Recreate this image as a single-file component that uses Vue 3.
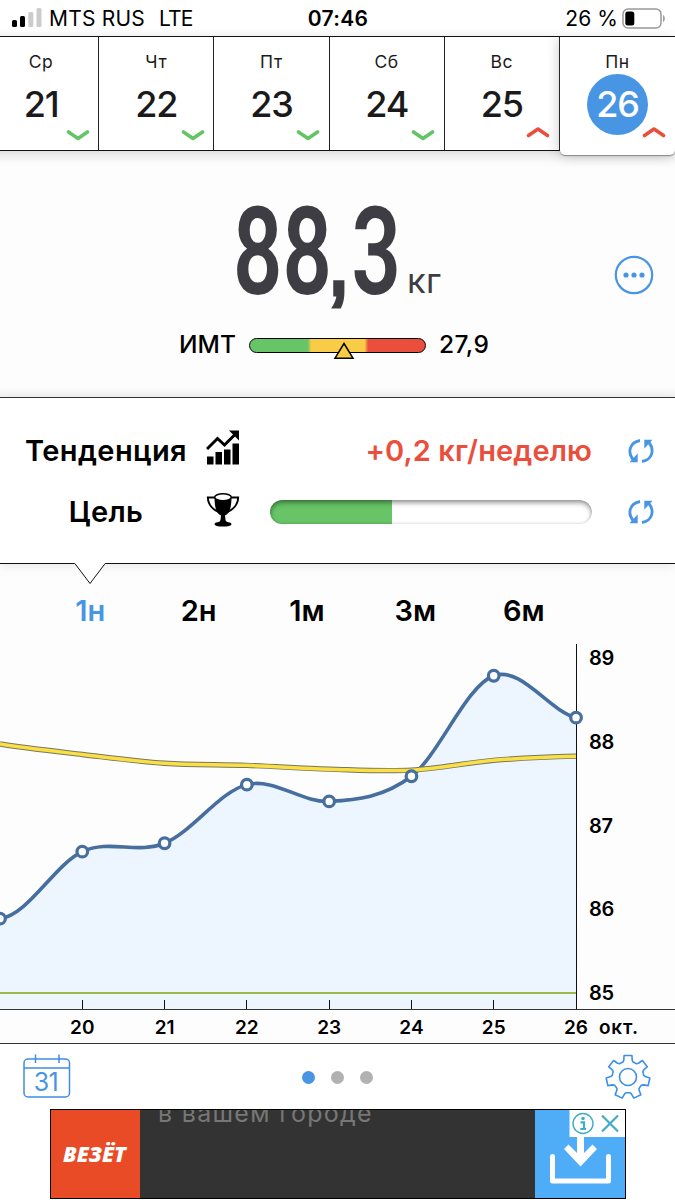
<script setup>
import { ref, computed } from 'vue'

const days = [
  { name: 'Ср', num: 21, dir: 'down' },
  { name: 'Чт', num: 22, dir: 'down' },
  { name: 'Пт', num: 23, dir: 'down' },
  { name: 'Сб', num: 24, dir: 'down' },
  { name: 'Вс', num: 25, dir: 'up' },
  { name: 'Пн', num: 26, dir: 'up' },
]
const selected = ref(26)

const ranges = ['1н', '2н', '1м', '3м', '6м']
const range  = ref('1н')

const goal = 38

// chart geometry
const STEP = 82.29
const TOP  = 644
const yOf  = v => 994 - TOP - (v - 85) * 83.75

const weights = [85.9, 86.7, 86.8, 87.5, 87.3, 87.6, 88.8, 88.3]
const trend   = [87.985, 87.86, 87.755, 87.73, 87.685, 87.673, 87.79, 87.84]
const ticks   = [20, 21, 22, 23, 24, 25]
const levels  = [89, 88, 87, 86, 85]

const toPoints = list => list.map((v, i) => ({ x: i * STEP, y: yOf(v) }))

// Catmull-Rom through the points, written as cubic beziers
function smooth(pts, first) {
  const slope = i => {
    if (i === 0) return first
    const a = pts[i - 1]
    const b = pts[i + 1] || pts[i]
    return (b.y - a.y) / 2
  }
  let d = `M${pts[0].x},${pts[0].y}`
  for (let i = 1; i < pts.length; i++) {
    const a = pts[i - 1], b = pts[i]
    d += ` C${a.x + STEP / 3},${a.y + slope(i - 1) / 3} ${b.x - STEP / 3},${b.y - slope(i) / 3} ${b.x},${b.y}`
  }
  return d
}

const points    = computed(() => toPoints(weights))
const line      = computed(() => smooth(points.value, -8))
const area      = computed(() => `${line.value} V365 H0 Z`)
const trendLine = computed(() => smooth(toPoints(trend), 13))

// seven-tooth gear outline
const gear = (() => {
  const out = []
  for (let i = 0; i < 7; i++) {
    const c = -Math.PI / 2 + i * Math.PI * 2 / 7
    for (const [r, a] of [[15.8, -0.33], [17.2, -0.25], [21.9, -0.18], [21.9, 0.18], [17.2, 0.25], [15.8, 0.33]]) {
      out.push(`${(24 + r * Math.cos(c + a)).toFixed(2)},${(24 + r * Math.sin(c + a)).toFixed(2)}`)
    }
  }
  return out.join(' ')
})()
</script>

<template>
  <div class="app">
    <!-- status bar -->
    <header class="status">
      <div class="status-left">
        <svg class="signal" width="30" height="20" viewBox="0 0 30 20">
          <rect x="0" y="12" width="5" height="7" rx="1.500" fill="#000" />
          <rect x="8" y="8" width="5" height="11" rx="1.500" fill="#000" />
          <rect x="16.300" y="4" width="5" height="15" rx="1.500" fill="#ccc" />
          <rect x="24.500" y="0" width="5" height="19" rx="1.500" fill="#ccc" />
        </svg>
        <span class="carrier">MTS RUS</span>
        <span class="network">LTE</span>
      </div>
      <div class="clock">07:46</div>
      <div class="status-right">
        <span class="percent">26 %</span>
        <svg width="44" height="21" viewBox="0 0 44 21">
          <rect x="1" y="1" width="38" height="19" rx="5" fill="#fff" stroke="#999" stroke-width="1.500" />
          <rect x="3.300" y="3.500" width="9" height="14" rx="2.500" fill="#000" />
          <path d="M41.500 7.500 Q43.500 10.500 41.500 13.500 Z" fill="#999" stroke="#999" stroke-width=".8" />
        </svg>
      </div>
    </header>

    <!-- week strip -->
    <nav class="week">
      <div
        v-for="d in days"
        :key="d.num"
        class="day"
        :class="{ 'day-active': d.num === selected }"
        @click="selected = d.num"
      >
        <div class="day-name">{{ d.name }}</div>
        <div class="day-num">{{ d.num }}</div>
        <svg class="day-dir" :class="'day-' + d.dir" width="24" height="12" viewBox="0 0 24 12">
          <path :d="d.dir === 'down' ? 'M2.500 2 L12 8.500 L21.500 2' : 'M2.500 9.500 L12 3 L21.500 9.500'" />
        </svg>
      </div>
    </nav>

    <!-- current weight -->
    <section class="weight">
      <div class="weight-row">
        <svg class="weight-value" width="170" height="120" viewBox="0 0 170 120">
          <text transform="translate(0 92.500) scale(.71 1)">88<tspan class="comma" x="138.500">,</tspan><tspan x="167">3</tspan></text>
        </svg>
        <span class="weight-unit">кг</span>
      </div>
      <div class="bmi">
        <span class="bmi-label">ИМТ</span>
        <div class="bmi-bar">
          <svg class="bmi-mark" width="22" height="18" viewBox="0 0 22 18">
            <path d="M11 1.500 L20 16.200 H2 Z" />
          </svg>
        </div>
        <span class="bmi-value">27,9</span>
      </div>
      <button class="more">
        <svg width="40" height="40" viewBox="0 0 40 40">
          <circle cx="20" cy="20" r="18.200" fill="none" stroke="#4896e3" stroke-width="2.200" />
          <circle v-for="x in [12, 20, 28]" :key="x" :cx="x" cy="20" r="2.600" fill="#4896e3" />
        </svg>
      </button>
    </section>

    <!-- trend and goal -->
    <section class="panel">
      <div class="panel-row">
        <span class="panel-label">Тенденция</span>
        <svg class="panel-icon panel-icon-trend" width="34" height="36" viewBox="0 0 34 36">
          <path d="M1 27.500h6.500v8H1zM9.500 23h6.500v12.500H9.500zM18 20.500h6.500v15h-6.500zM26.500 14.500h6.500v21h-6.500z" />
          <path d="M1 20 L11.500 9.500 L18.500 16 L29 5.500" fill="none" stroke="#000" stroke-width="3" />
          <path d="M23 1.500 H33 V11.500 Z" />
        </svg>
        <span class="panel-value">+0,2 кг/неделю</span>
        <svg class="sync" width="26" height="26" viewBox="0 0 26 26">
          <path d="M12 2.500 C1.500 4.500 -1 14.500 5.500 22 M14 23.500 C24.500 21.500 27 11.500 20.500 4" />
          <path class="sync-head" d="M1.500 24.300 H9.700 V15.300 L7.300 18 L4.500 21 Z M24.500 1.700 H16.300 V10.700 L18.700 8 L21.500 5 Z" />
        </svg>
      </div>
      <div class="panel-row">
        <span class="panel-label">Цель</span>
        <svg class="panel-icon panel-icon-goal" width="34" height="36" viewBox="0 0 34 36">
          <path d="M8.500 5 C8.500 17 11 22 15 23.500 L14.500 28 Q14 30 10 30.500 Q8.500 31.200 8.500 32.200 Q9 34.500 17 34.500 Q25 34.500 25.500 32.200 Q25.500 31.200 24 30.500 Q20 30 19.500 28 L19 23.500 C23 22 25.500 17 25.500 5 Z" />
          <ellipse cx="17" cy="5.200" rx="8.300" ry="3.500" fill="#fff" stroke="#000" stroke-width="1.600" />
          <path d="M8.500 5.500 H1.800 Q2 15 12.500 20 M25.500 5.500 H32.200 Q32 15 21.500 20" fill="none" stroke="#000" stroke-width="1.900" />
        </svg>
        <div class="goal">
          <div class="goal-fill" :style="{ width: goal + '%' }"></div>
        </div>
        <svg class="sync" width="26" height="26" viewBox="0 0 26 26">
          <path d="M12 2.500 C1.500 4.500 -1 14.500 5.500 22 M14 23.500 C24.500 21.500 27 11.500 20.500 4" />
          <path class="sync-head" d="M1.500 24.300 H9.700 V15.300 L7.300 18 L4.500 21 Z M24.500 1.700 H16.300 V10.700 L18.700 8 L21.500 5 Z" />
        </svg>
      </div>
      <svg class="notch" width="32" height="22" viewBox="0 0 32 22">
        <path d="M.5 0 L1 .7 L16 20.500 L31 .7 L31.500 0 Z" fill="#fff" />
        <path d="M1 .7 L16 20.500 L31 .7" fill="none" stroke="#111" />
      </svg>
    </section>

    <!-- range tabs -->
    <div class="ranges">
      <button
        v-for="r in ranges"
        :key="r"
        class="range"
        :class="{ 'range-active': r === range }"
        @click="range = r"
      >{{ r }}</button>
    </div>

    <!-- chart -->
    <svg class="chart" width="675" height="400" viewBox="0 0 675 400">
      <path :d="area" fill="#edf5ff" />
      <path d="M0 349 H576" stroke="#9aba4c" stroke-width="2" />
      <path :d="line" fill="none" stroke="#466e9e" stroke-width="3.600" />
      <path :d="trendLine" fill="none" stroke="#77775f" stroke-width="5.400" />
      <path :d="trendLine" fill="none" stroke="#fbe045" stroke-width="3.500" />
      <path d="M576.500 0 V365" stroke="#111" />
      <path d="M0 365.500 H675 M0 399.500 H675" stroke="#333" />
      <g v-for="(t, i) in ticks" :key="t">
        <path :d="`M${Math.floor((i + 1) * STEP) + .5} 356 V365`" stroke="#111" />
        <text class="tick" :x="(i + 1) * STEP" y="389.500" text-anchor="middle">{{ t }}</text>
      </g>
      <text class="tick" x="576" y="389.500" text-anchor="middle">26</text>
      <text class="tick month" x="599" y="389.500">окт.</text>
      <text v-for="v in levels" :key="v" class="tick level" x="589" :y="yOf(v) + 6">{{ v }}</text>
      <circle
        v-for="p in points"
        :key="p.x"
        :cx="p.x"
        :cy="p.y"
        r="5.300"
        fill="#fff"
        stroke="#466e9e"
        stroke-width="3.200"
      />
    </svg>

    <!-- toolbar -->
    <div class="toolbar">
      <svg width="48" height="45" viewBox="0 0 48 45">
        <rect x="1" y="5" width="45.500" height="38" rx="4" fill="none" stroke="#3f8fe4" stroke-width="1.500" />
        <path d="M1 14 H46.500 M12.500 .5 V9 M36 .5 V9" fill="none" stroke="#3f8fe4" stroke-width="1.500" />
        <text class="cal" x="22.800" y="36.500" text-anchor="middle">31</text>
      </svg>
      <div class="dots">
        <i class="dot dot-active"></i>
        <i class="dot"></i>
        <i class="dot"></i>
      </div>
      <svg width="48" height="48" viewBox="0 0 48 48">
        <polygon :points="gear" fill="none" stroke="#3f8fe4" stroke-width="1.600" stroke-linejoin="round" />
        <circle cx="24" cy="24" r="8.500" fill="none" stroke="#3f8fe4" stroke-width="1.600" />
      </svg>
    </div>

    <!-- ad banner -->
    <div class="ad">
      <div class="ad-logo">ВЕЗЁТ</div>
      <div class="ad-text">в вашем городе</div>
      <div class="ad-cta">
        <svg width="90" height="87" viewBox="0 0 90 87">
          <path d="M17.500 46.500 V71 H73.500 V46.500" fill="none" stroke="#fff" stroke-width="5" stroke-linecap="round" stroke-linejoin="round" />
          <path d="M42 20 H49 V43 L57.500 34.500 L62 39 L45.500 56.500 L29 39 L33.500 34.500 L42 43 Z" fill="#fff" />
          <rect x="34.500" y="0" width="55.500" height="27" fill="#fff" />
          <circle cx="48" cy="13.500" r="10" fill="none" stroke="#41abc9" stroke-width="1.400" />
          <path d="M45.500 12.300 H49 V19 M45.300 19 H51" fill="none" stroke="#41abc9" stroke-width="2.200" />
          <circle cx="48" cy="8.500" r="1.800" fill="#41abc9" />
          <path d="M67 5.500 L83 21.500 M83 5.500 L67 21.500" stroke="#41abc9" stroke-width="2.200" />
        </svg>
      </div>
    </div>
  </div>
</template>

<style>
body { margin: 0; background: #fff; }
</style>

<style scoped>
.app {
  width: 675px;
  height: 1200px;
  overflow: hidden;
  background: #fff;
  font-family: Inter, "Noto Sans", sans-serif;
  color: #000;
}

button {
  padding: 0;
  border: 0;
  background: none;
  font: inherit;
  color: inherit;
}

svg { display: block; flex: none; }

/* ── Status bar ── */
.status {
  display: grid;
  grid-template-columns: 1fr auto 1fr;
  align-items: center;
  box-sizing: border-box;
  height: 36px;
  padding: 0 9px 0 12px;
  font-size: 21px;
  white-space: nowrap;
}

.status-left, .status-right {
  display: flex;
  align-items: center;
}

.status-right { justify-content: flex-end; gap: 4px; }
.signal { margin-right: 7px; }
.carrier { letter-spacing: 0.2px; }
.network { margin-left: 14px; letter-spacing: -0.8px; }
.percent { letter-spacing: 0.1px; }
.clock { font-weight: 600; letter-spacing: 0.3px; margin-right: 2px; }

/* ── Week ── */
.week {
  display: grid;
  grid-template-columns: repeat(6, 115.2px);
  grid-template-rows: 113px;
  margin-left: -16px;
  height: 113px;
  border-top: 1px solid #111;
  border-bottom: 1px solid #111;
  position: relative;
  z-index: 1;
  box-shadow: 0 3px 12px rgba(0, 0, 0, 0.16);
  background: #fff;
}

.day {
  position: relative;
  box-sizing: border-box;
  display: flex;
  flex-direction: column;
  align-items: center;
  padding-top: 12px;
  border-right: 1px solid #222;
  color: #1a1a1a;
}

.day-active {
  height: 118px;
  border-right: 0;
  border-radius: 0 0 5px 5px;
  background: #fff;
  box-shadow: 0 1px 1px #888, 0 0 14px rgba(0, 0, 0, 0.25);
  clip-path: inset(0 0 -16px -20px);
}

.day-name {
  font-size: 17.5px;
  line-height: 25px;
  letter-spacing: 0.7px;
}

.day-num {
  display: flex;
  align-items: center;
  justify-content: center;
  box-sizing: border-box;
  width: 61px;
  height: 61px;
  padding-bottom: 1px;
  border-radius: 50%;
  font-size: 36px;
  font-weight: 500;
  letter-spacing: -1.2px;
}

.day-active .day-num { background: #4896e3; color: #fff; }

.day-dir {
  position: absolute;
  right: 8.5px;
  top: 92.5px;
  fill: none;
  stroke-width: 3.6;
  stroke-linecap: round;
  stroke-linejoin: round;
}

.day-down { stroke: #64c466; }
.day-up   { stroke: #ea4f3d; top: 88.5px; }
.day-active .day-dir { right: 9.5px; }

/* ── Weight ── */
.weight {
  position: relative;
  height: 246px;
  background: linear-gradient(#fdfdfd 0, #fdfdfd 236px, #f0f0f0 246px);
}

.weight-row {
  display: flex;
  align-items: flex-start;
  padding: 50px 0 0 233px;
}

.weight-value { overflow: visible; }

.weight-value text {
  font-family: Roboto, sans-serif;
  font-size: 122px;
  font-weight: 600;
  fill: #3e3d44;
}

.weight-value .comma {
  font-family: "Liberation Sans", sans-serif;
  font-size: 76px;
  font-weight: 700;
  stroke: #3e3d44;
  stroke-width: 5px;
}

.weight-unit {
  margin: 60px 0 0 4px;
  font-size: 34.5px;
  line-height: 40px;
  letter-spacing: 0.4px;
  color: #3e3d44;
}

.bmi {
  display: flex;
  align-items: center;
  height: 30px;
  margin-top: 8px;
  padding-left: 179px;
  font-size: 24.5px;
  font-weight: 500;
}

.bmi-label { width: 57px; }
.bmi-value { letter-spacing: 0.4px; }

.bmi-bar {
  position: relative;
  box-sizing: border-box;
  width: 177px;
  height: 15px;
  margin: 2px 13px 0;
  border: 1.5px solid #000;
  border-radius: 8px;
  background: linear-gradient(90deg, #67c567 33%, #f8cc46 35%, #f8cc46 65.5%, #ea4f3d 67.5%);
}

.bmi-mark {
  position: absolute;
  left: 82.5px;
  top: 3px;
  fill: #f8cc46;
  stroke: #000;
  stroke-width: 1.5;
}

.more {
  position: absolute;
  right: 21.5px;
  top: 104px;
}

/* ── Trend and goal ── */
.panel {
  position: relative;
  z-index: 1;
  box-sizing: border-box;
  height: 167px;
  padding-top: 22px;
  border-top: 1px solid #333;
  border-bottom: 1px solid #111;
  background: #fff;
  box-shadow: 0 3px 10px rgba(0, 0, 0, 0.08);
}

.panel-row {
  display: grid;
  grid-template-columns: 200px 34px 1fr 26px;
  align-items: center;
  height: 61px;
  padding: 0 21px 0 6px;
}

.panel-label {
  margin-top: -1px;
  text-align: center;
  font-size: 29px;
  font-weight: 600;
  letter-spacing: 0.4px;
}

.panel-icon-trend { margin-top: -7px; }
.panel-icon-goal  { margin-top: -3px; }

.panel-value {
  justify-self: end;
  margin: -1px 36px 0 0;
  font-size: 29px;
  font-weight: 600;
  letter-spacing: 0.1px;
  white-space: nowrap;
  color: #ea4f3d;
}

.goal {
  margin: 0 36px 0 30px;
  height: 24px;
  border-radius: 12px;
  overflow: hidden;
  position: relative;
  background: #fff;
}

.goal-fill { height: 100%; background: #67c567; }

.goal::after {
  content: '';
  position: absolute;
  inset: 0;
  border-radius: 12px;
  box-shadow: inset 0 3px 5px rgba(0, 0, 0, 0.38), inset 0 0 3px rgba(0, 0, 0, 0.18);
}

.sync { fill: none; stroke: #4896e3; stroke-width: 2.8; }
.sync-head { fill: #4896e3; stroke: none; }

.notch {
  position: absolute;
  left: 74px;
  top: 165px;
}

/* ── Ranges ── */
.ranges {
  display: grid;
  grid-template-columns: repeat(5, 108.4px);
  padding: 15px 0 0 36px;
  height: 65px;
  background: #fdfdfd;
}

.range {
  height: 62px;
  font-size: 29px;
  font-weight: 600;
}

.range-active { color: #4896e3; }

/* ── Chart ── */
.chart { background: #fdfdfd; }

.tick {
  font-size: 19px;
  font-weight: 600;
}

.month { letter-spacing: 0.8px; }

.level {
  font-size: 20px;
  letter-spacing: -0.2px;
}

/* ── Toolbar ── */
.toolbar {
  display: flex;
  align-items: center;
  justify-content: space-between;
  height: 65px;
  padding: 0 23px;
}

.cal {
  font-size: 25px;
  letter-spacing: -0.8px;
  fill: #4896e3;
}

.dots {
  display: flex;
  gap: 16px;
  margin-top: 2px;
}

.dot {
  width: 13px;
  height: 13px;
  border-radius: 50%;
  background: #b1b1b1;
}

.dot-active { background: #4896e3; }

/* ── Ad ── */
.ad {
  display: flex;
  box-sizing: border-box;
  width: 576px;
  height: 90px;
  margin-left: 50px;
  border: 1.5px solid #000;
  background: #333;
  overflow: hidden;
}

.ad-logo {
  width: 89px;
  line-height: 88px;
  background: #e94b27;
  color: #fff;
  text-align: center;
  text-indent: -2px;
  font-family: "Open Sans", sans-serif;
  font-size: 21.5px;
  font-weight: 800;
  font-style: italic;
}

.ad-text {
  flex: 1;
  padding-left: 18px;
  margin-top: -12px;
  font-size: 25px;
  line-height: 30px;
  letter-spacing: 1.3px;
  white-space: nowrap;
  color: #777;
}

.ad-cta { width: 90px; background: #4fadf8; }
</style>
